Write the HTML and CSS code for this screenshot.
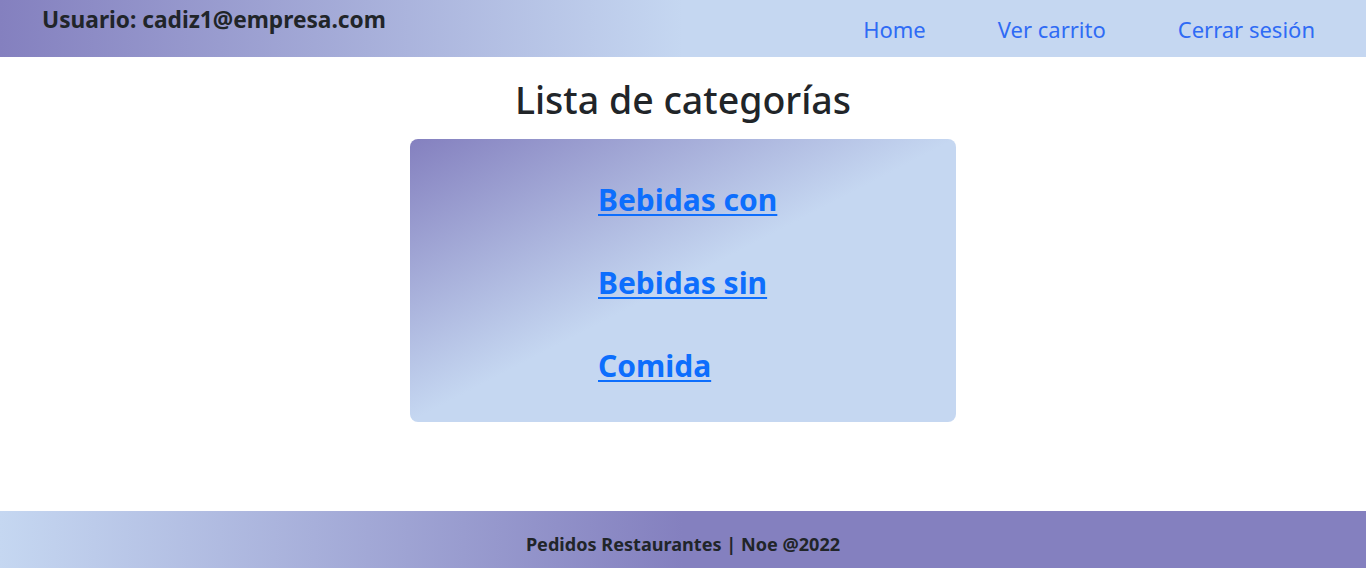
FILE: index.html
```html
<!DOCTYPE html>
<html lang="es">
<head>
<meta charset="utf-8">
<title>Lista de categorías</title>
<link rel="stylesheet" href="styles.css">
</head>
<body>
<header class="topbar">
  <h4 class="user">Usuario: cadiz1@empresa.com</h4>
  <nav class="nav">
    <a class="nav-link" href="#">Home</a>
    <a class="nav-link" href="#">Ver carrito</a>
    <a class="nav-link" href="#">Cerrar sesión</a>
  </nav>
</header>
<main class="main">
  <h1 class="title">Lista de categorías</h1>
  <section class="card">
    <ul class="cats">
      <li><a href="#">Bebidas con</a></li>
      <li><a href="#">Bebidas sin</a></li>
      <li><a href="#">Comida</a></li>
    </ul>
  </section>
</main>
<footer class="footer">
  <p class="foot-text">Pedidos Restaurantes | Noe @2022</p>
</footer>
</body>
</html>
```
FILE: styles.css
```css
* { box-sizing: border-box; }
html, body { margin: 0; padding: 0; }
body {
  font-family: "Noto Sans", "Open Sans", sans-serif;
  color: #212529;
  background: #fff;
  height: 568px;
  display: flex;
  flex-direction: column;
}
.topbar {
  height: 57px;
  flex: none;
  display: flex;
  justify-content: space-between;
  align-items: flex-start;
  padding: 0 51px 0 42px;
  background: linear-gradient(to right, #8480bf 0%, #c5d7f1 50%, #c5d7f1 100%);
}
.user {
  margin: 6px 0 0;
  font-size: 22.7px;
  font-weight: 700;
  line-height: 1.2;
}
.nav {
  display: flex;
  gap: 72px;
  margin-top: 16px;
}
.nav-link {
  color: #2f6bf5;
  text-decoration: none;
  font-size: 22px;
  line-height: 1.2;
}
.main {
  flex: 1;
  display: flex;
  flex-direction: column;
  align-items: center;
}
.title {
  margin: 20px 0 17px;
  font-size: 37.5px;
  font-weight: 500;
  line-height: 1.2;
}
.card {
  width: 546px;
  height: 283px;
  border-radius: 8px;
  background: linear-gradient(to bottom right, #8480bf 0%, #c5d7f1 50%, #c5d7f1 100%);
  padding: 41px 0 0 188px;
}
.cats {
  list-style: none;
  margin: 0;
  padding: 0;
  display: flex;
  flex-direction: column;
  gap: 44px;
}
.cats a {
  color: #0d6efd;
  font-size: 30px;
  font-weight: 700;
  line-height: 39px;
  text-decoration: underline;
  text-underline-offset: 3px;
  text-decoration-thickness: 2px;
}
.footer {
  height: 57px;
  flex: none;
  display: flex;
  align-items: center;
  justify-content: center;
  padding-top: 8px;
  background: linear-gradient(to right, #c5d7f1 0%, #8480bf 50%, #8480bf 100%);
}
.foot-text {
  margin: 0;
  font-size: 18.1px;
  font-weight: 700;
}
```
